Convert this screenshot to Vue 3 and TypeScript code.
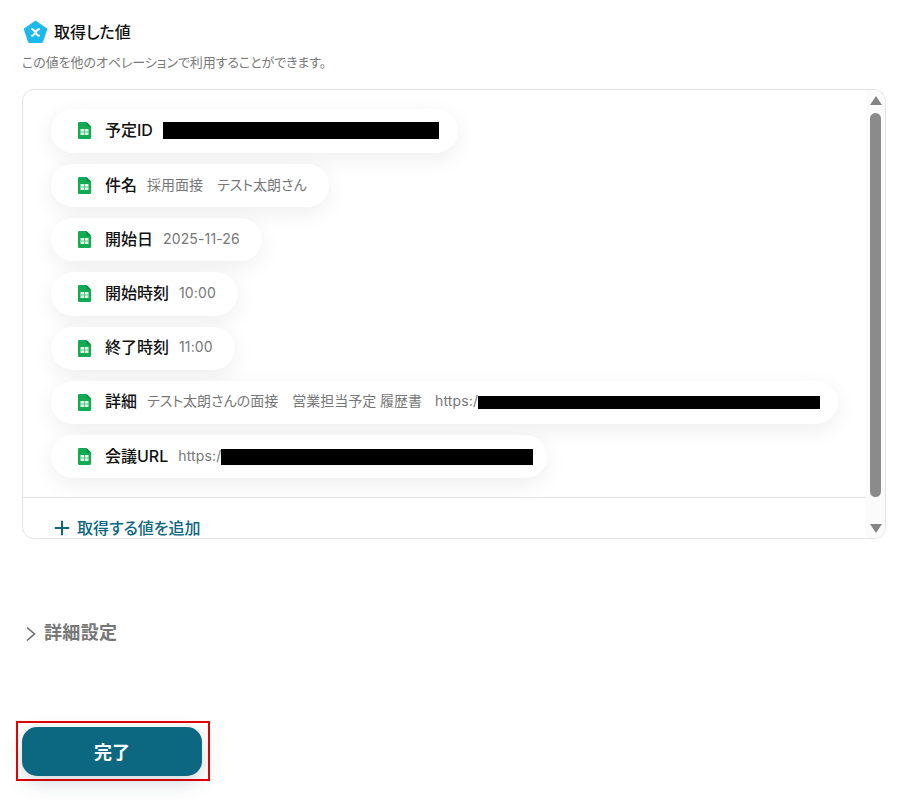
<script setup lang="ts">
interface Row {
  label: string;
  jp?: string;
  latin?: string;
  mask?: number;
  maskHeight?: number;
  overhang?: number;
}

const rows: Row[] = [
  { label: "予定ID", mask: 276, maskHeight: 17.2, overhang: 3.5 },
  { label: "件名", jp: "採用面接　テスト太朗さん" },
  { label: "開始日", latin: "2025-11-26" },
  { label: "開始時刻", latin: "10:00" },
  { label: "終了時刻", latin: "11:00" },
  { label: "詳細", jp: "テスト太朗さんの面接　営業担当予定 履歴書", latin: "https:/", mask: 342, maskHeight: 13, overhang: 4.5 },
  { label: "会議URL", latin: "https:/", mask: 312, maskHeight: 16, overhang: 8.5 },
];
</script>

<template>
  <main class="page">
    <header class="title-row">
      <svg class="logo" width="26" height="24" viewBox="0 0 26 24" aria-hidden="true">
        <path d="M12.500 1.900 23 9.200 18.900 21.700H6.100L2 9.200Z" fill="#1bb9ec" stroke="#1bb9ec" stroke-width="2.400" stroke-linejoin="round" />
        <path d="M9 9.300c1.700 0 2.200.9 3.500 3.200s1.800 3.200 3.500 3.200M16 9.300c-1.700 0-2.200.9-3.500 3.200S10.700 15.700 9 15.700" stroke="#fff" stroke-width="2" stroke-linecap="round" fill="none" />
      </svg>
      <h2 class="title">取得した値</h2>
    </header>
    <p class="note">この値を他のオペレーションで利用することができます。</p>

    <section class="card">
      <div class="content">
        <ul class="list">
          <li v-for="row in rows" :key="row.label" class="pill">
            <svg class="sheet" width="13" height="17" viewBox="0 0 13 17" aria-hidden="true">
              <path d="M1.300 0H8.500L13 4.500v11.200a1.300 1.300 0 0 1-1.300 1.300H1.300A1.300 1.300 0 0 1 0 15.700V1.300A1.300 1.300 0 0 1 1.300 0Z" fill="#10ab52" />
              <path d="M8.500 0 13 4.500H9.500a1 1 0 0 1-1-1Z" fill="#0b8a40" />
              <rect x="2.500" y="7" width="8" height="6" fill="#e3f6ea" />
              <path d="M2.500 10h8M6.500 7v6" fill="none" stroke="#5cc788" stroke-width="1" />
            </svg>
            <span class="label">{{ row.label }}</span>
            <span v-if="row.jp" class="value">{{ row.jp }}</span>
            <span v-if="row.latin" class="value latin" :class="{ spaced: row.jp }">{{ row.latin }}</span>
            <span
              v-if="row.mask"
              class="mask"
              :style="{ width: row.mask + 'px', height: row.maskHeight + 'px', marginRight: -(row.overhang ?? 0) + 'px' }"
            ></span>
          </li>
        </ul>
        <div class="add">
          <svg width="16" height="16" viewBox="0 0 16 16" aria-hidden="true">
            <path d="M8 .8v14.400M.8 8h14.400" stroke="#0b6880" stroke-width="2" fill="none" />
          </svg>
          <span>取得する値を追加</span>
        </div>
      </div>
      <div class="scrollbar" aria-hidden="true">
        <span class="arrow up"></span>
        <span class="thumb"></span>
        <span class="arrow down"></span>
      </div>
    </section>

    <div class="advanced">
      <svg width="12" height="16" viewBox="0 0 12 16" aria-hidden="true">
        <path d="M2 1.500 9.500 8 2 14.500" stroke="#666" stroke-width="1.500" fill="none" />
      </svg>
      <span>詳細設定</span>
    </div>

    <div class="submit-frame">
      <button class="submit" type="button">完了</button>
    </div>
  </main>
</template>

<style>
html,
body {
  margin: 0;
  background: #fff;
}
</style>

<style scoped>
.page {
  width: 906px;
  height: 802px;
  box-sizing: border-box;
  padding: 20px 20px 0 22px;
  overflow: hidden;
  font-family: Inter, "Noto Sans CJK JP", sans-serif;
  font-feature-settings: "palt";
  color: #222;
}
.title-row {
  display: flex;
  align-items: center;
  gap: 5px;
  height: 24px;
  margin-left: 1px;
}
.logo {
  flex: none;
}
.title {
  margin: 0;
  font-size: 16px;
  line-height: 24px;
  font-weight: 500;
  color: #111;
}
.note {
  margin: 9px 0 0;
  font-size: 13px;
  letter-spacing: -0.07px;
  line-height: 18px;
  color: #7a7a7a;
  height: 18px;
}
.card {
  display: flex;
  height: 450px;
  box-sizing: border-box;
  margin-top: 18px;
  border: 1px solid #e4e4e4;
  border-radius: 12px;
  overflow: hidden;
  width: 864px;
}
.content {
  flex: 1;
  min-width: 0;
}
.list {
  list-style: none;
  margin: 0;
  padding: 18.600px 0 0 28px;
  display: flex;
  flex-direction: column;
  align-items: flex-start;
  gap: 11px;
  height: 408px;
  box-sizing: border-box;
  border-bottom: 1px solid #e4e4e4;
}
.pill {
  flex: none;
  display: flex;
  align-items: center;
  box-sizing: border-box;
  padding: 13.600px 22.500px 13.600px 27px;
  border-radius: 22px;
  background: #fff;
  box-shadow: 0 6px 22px rgba(0, 0, 0, 0.07);
  white-space: nowrap;
}
.sheet {
  flex: none;
  margin: -1px 14px -1px 0;
}
.label {
  font-size: 16px;
  line-height: 16px;
  font-weight: 500;
  color: #111;
  margin: -1px 10px 1px 0;
}
.value {
  font-size: 14px;
  line-height: 16px;
  color: #777;
  margin: -1px 0 1px;
}
.latin {
  letter-spacing: 0.14px;
}
.spaced {
  margin-left: 13px;
}
.mask {
  display: block;
  background: #000;
  flex: none;
}
.add {
  display: flex;
  align-items: center;
  gap: 7px;
  margin: 19px 0 0 31px;
  font-size: 16px;
  line-height: 22px;
  font-weight: 500;
  color: #0b6880;
}
.scrollbar {
  flex: none;
  width: 19px;
  background: #fbfbfb;
  display: flex;
  flex-direction: column;
  align-items: center;
  padding: 6px 0 5px;
  box-sizing: border-box;
}
.arrow {
  width: 0;
  height: 0;
  border-left: 6.500px solid transparent;
  border-right: 6.500px solid transparent;
}
.arrow.up {
  border-bottom: 9px solid #858585;
}
.arrow.down {
  border-top: 9px solid #858585;
}
.thumb {
  width: 11px;
  height: 384px;
  margin: 8px 0 auto;
  border-radius: 6px;
  background: #8b8b8b;
}
.advanced {
  display: flex;
  align-items: center;
  gap: 7px;
  margin: 80px 0 0 3px;
  height: 24px;
  font-size: 18px;
  letter-spacing: 0.36px;
  font-weight: 600;
  color: #777;
}
.advanced svg {
  margin-top: 6px;
}
.submit-frame {
  width: 194px;
  height: 60px;
  box-sizing: border-box;
  margin: 78px 0 0 -6px;
  border: 2px solid #e60000;
  padding: 4px;
}
.submit {
  display: block;
  width: 180px;
  height: 49px;
  margin: 0;
  padding: 0 0 2px;
  border: 0;
  border-radius: 15px;
  background: #0b6880;
  color: #fff;
  font: inherit;
  font-size: 18px;
  font-weight: 700;
  box-shadow: 0 6px 20px rgba(11, 60, 80, 0.2);
}
</style>
